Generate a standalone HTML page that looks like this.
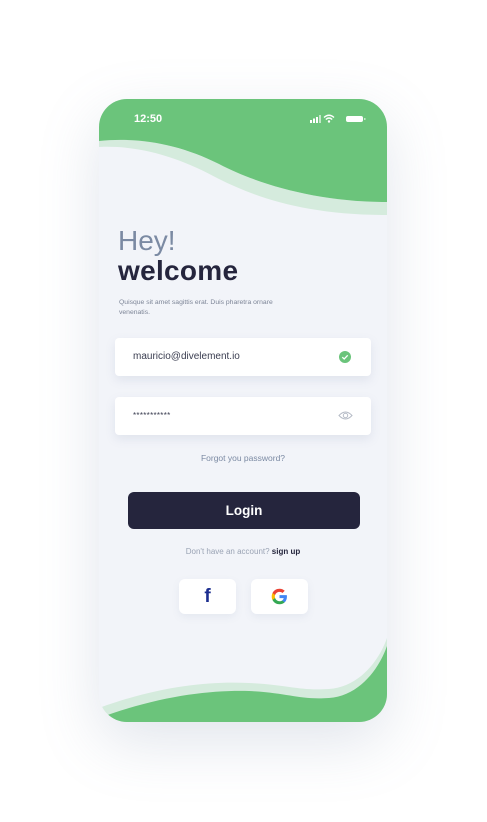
<!DOCTYPE html>
<html><head><meta charset="utf-8"><style>
*{margin:0;padding:0;box-sizing:border-box}
body{width:487px;height:822px;background:#fff;position:relative;font-family:"Liberation Sans",sans-serif;overflow:hidden}
.phone{position:absolute;left:99px;top:99px;width:288px;height:623px;border-radius:28px;background:#f2f4f9;overflow:hidden;box-shadow:0 20px 60px rgba(120,135,170,0.22)}
.abs{position:absolute}
.field{position:absolute;left:16px;width:256px;height:38px;background:#fff;border-radius:4px;box-shadow:0 4px 10px rgba(120,135,170,0.15)}
.soc{position:absolute;top:480px;width:57px;height:35px;background:#fff;border-radius:6px;box-shadow:0 3px 8px rgba(120,135,170,0.1)}
</style></head><body>
<div class="phone">
<svg class="abs" style="left:0;top:0" width="288" height="623" viewBox="0 0 288 623">
<path d="M0,41 C40,38 80,45 120,65 C160,86 220,103 288,103 V116 C210,116 160,100 120,80 C80,58 40,46 0,48 Z" fill="#d5ebdd"/>
<path d="M0,0 H288 V103 C220,103 160,86 120,65 C80,45 40,38 0,42 Z" fill="#6bc47b"/>
<path d="M0,609 C60,587 110,582 150,584 C190,586 200,592 230,590 C260,588 280,562 288,539 V623 H0Z" fill="#d5ebdd"/>
<path d="M0,619 C60,597 110,591 150,592 C190,594 200,601 230,599 C260,597 280,570 288,547 V623 H0Z" fill="#6bc47b"/>
</svg>
<div class="abs" style="left:35px;top:14px;color:#fff;font-weight:bold;font-size:11px">12:50</div>
<svg class="abs" style="left:211px;top:15px" width="60" height="10" viewBox="0 0 60 10">
<rect x="0" y="6" width="2" height="3" fill="#fff"/><rect x="3" y="4.5" width="2" height="4.5" fill="#fff"/><rect x="6" y="3" width="2" height="6" fill="#fff"/><rect x="9" y="1" width="2" height="8" fill="#fff" opacity=".6"/>
<path d="M14,3.5 Q19,-1 24,3.5 M15.8,5.5 Q19,2.5 22.2,5.5" stroke="#fff" stroke-width="1.4" fill="none"/><circle cx="19" cy="7.5" r="1.2" fill="#fff"/>
<rect x="36" y="2" width="17" height="6" rx="2" fill="#fff"/><rect x="54" y="4" width="1.5" height="2" fill="#fff" opacity=".6"/>
</svg>
<div class="abs" style="left:19px;top:126px;font-size:28px;color:#7b8aa3">Hey!</div>
<div class="abs" style="left:19px;top:156px;font-size:28px;font-weight:bold;color:#25253d;letter-spacing:0.3px">welcome</div>
<div class="abs" style="left:20px;top:199px;font-size:6.8px;line-height:9.5px;color:#7d8597;width:172px">Quisque sit amet sagittis erat. Duis pharetra ornare venenatis.</div>
<div class="field" style="top:239px"><div class="abs" style="left:18px;top:13px;font-size:10px;color:#3a3d50">mauricio@divelement.io</div>
<svg class="abs" style="left:224px;top:13px" width="12" height="12"><circle cx="6" cy="6" r="6" fill="#6bc47b"/><path d="M3.3,6.2 L5.2,8 L8.7,4.3" stroke="#fff" stroke-width="1.3" fill="none"/></svg></div>
<div class="field" style="top:298px"><div class="abs" style="left:18px;top:14px;font-size:8px;color:#3a3d50;letter-spacing:0.3px">***********</div>
<svg class="abs" style="left:223px;top:13px" width="15" height="11" viewBox="0 0 15 11"><path d="M1,5.5 Q7.5,-1.5 14,5.5 Q7.5,12.5 1,5.5Z" stroke="#b5bbc6" stroke-width="1" fill="none"/><circle cx="7.5" cy="5.5" r="2.2" stroke="#b5bbc6" stroke-width="1" fill="none"/></svg></div>
<div class="abs" style="left:0;width:288px;text-align:center;top:354px;font-size:8.5px;color:#7b8aa3">Forgot you password?</div>
<div class="abs" style="left:29px;top:393px;width:232px;height:37px;border-radius:6px;background:#25253d;color:#fff;font-weight:bold;font-size:13.5px;text-align:center;line-height:37px">Login</div>
<div class="abs" style="left:0;width:288px;text-align:center;top:448px;font-size:8px;color:#9aa3b4">Don't have an account? <b style="color:#25253d">sign up</b></div>
<div class="soc" style="left:80px"><div class="abs" style="left:0;width:57px;text-align:center;top:7px;font-size:19px;font-weight:bold;color:#1c2e8f">f</div></div>
<div class="soc" style="left:152px"><svg class="abs" style="left:20px;top:9px" width="17" height="17" viewBox="0 0 24 24">
<path d="M22.5,12.2c0-.8-.1-1.5-.2-2.2H12v4.3h5.9c-.3,1.4-1,2.5-2.2,3.3v2.7h3.6c2-1.9,3.2-4.7,3.2-8.1z" fill="#4285F4"/>
<path d="M12,23c3,0,5.5-1,7.3-2.7l-3.6-2.7c-1,.7-2.2,1.1-3.7,1.1-2.9,0-5.3-1.9-6.2-4.5H2.1v2.8C3.9,20.6,7.7,23,12,23z" fill="#34A853"/>
<path d="M5.8,14.2c-.2-.7-.4-1.4-.4-2.2s.1-1.5.4-2.2V7H2.1C1.4,8.5,1,10.2,1,12s.4,3.5,1.1,5l3.7-2.8z" fill="#FBBC05"/>
<path d="M12,5.4c1.6,0,3.1.6,4.2,1.7l3.2-3.2C17.5,2.1,15,1,12,1,7.7,1,3.9,3.4,2.1,7l3.7,2.8C6.7,7.3,9.1,5.4,12,5.4z" fill="#EA4335"/></svg></div>
</div>
</body></html>
